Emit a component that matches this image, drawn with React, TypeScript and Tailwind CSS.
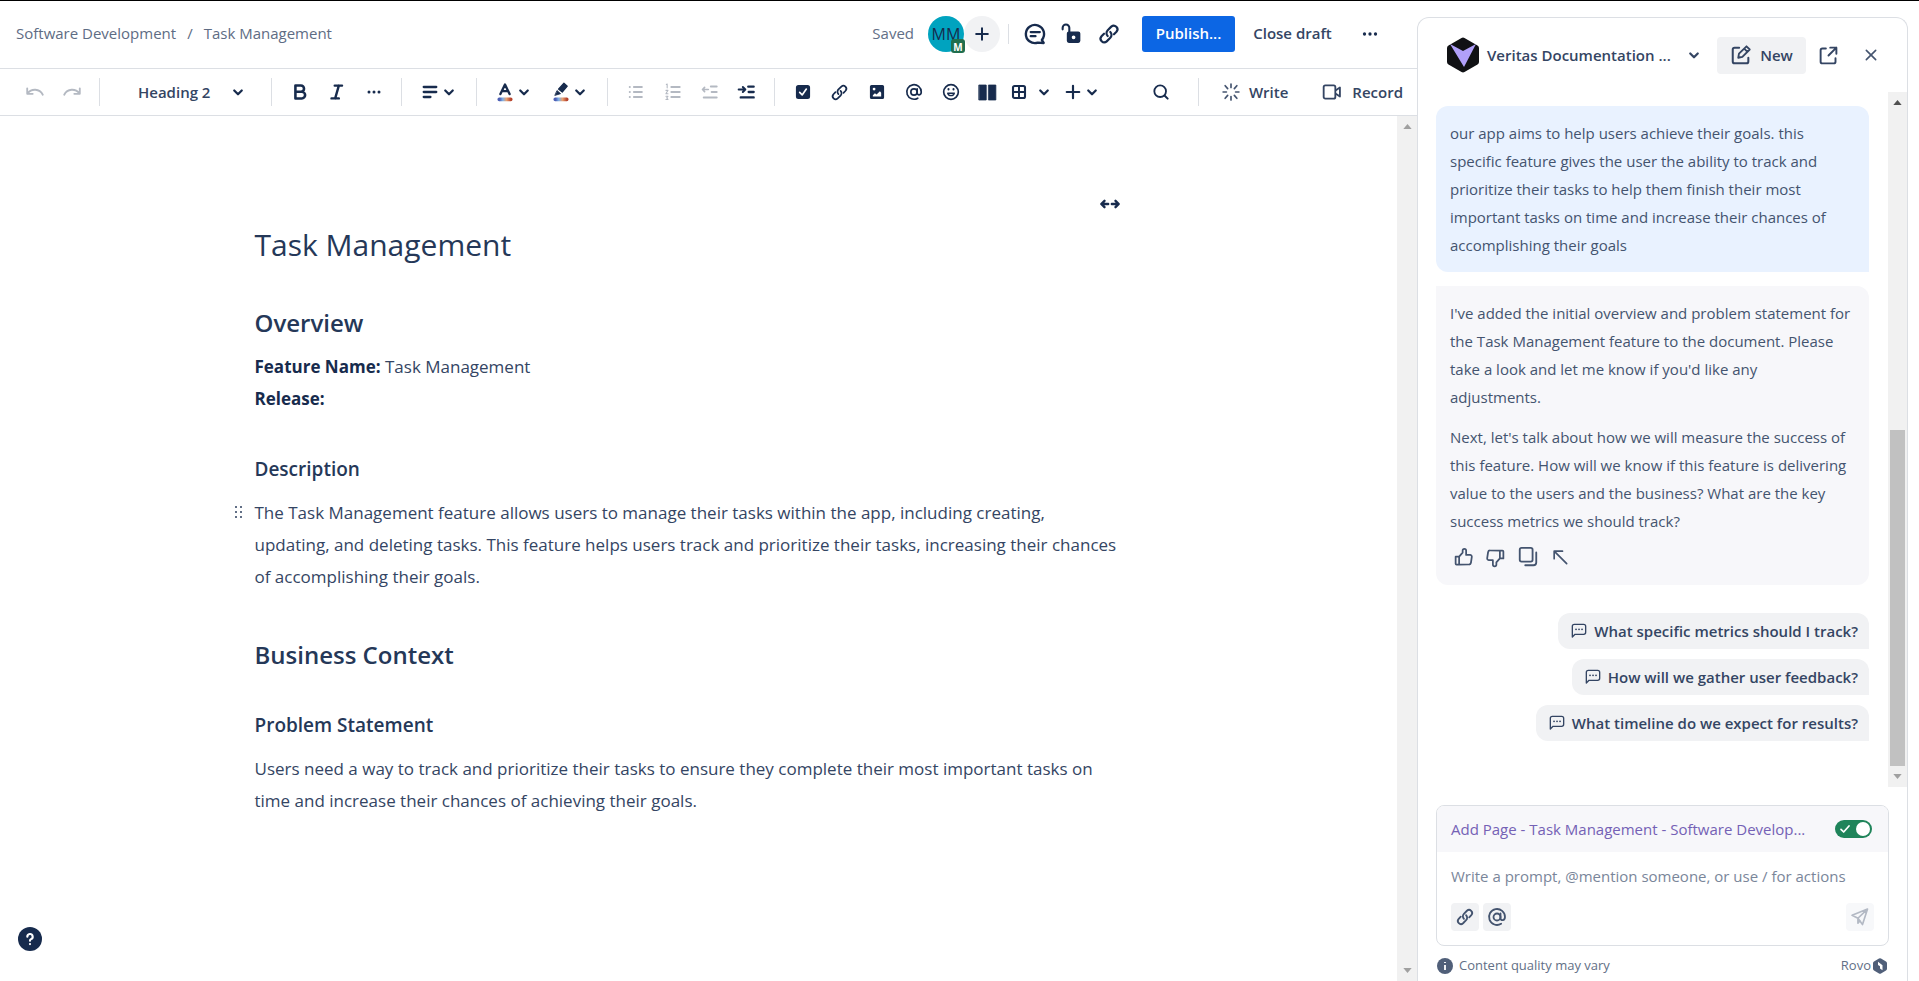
import { useState, type ReactNode } from 'react'
import { clsx } from 'clsx'

interface IconProps {
  size?: number
  className?: string
  children: ReactNode
}

function Icon({ size = 24, className, children }: IconProps) {
  return (
    <svg
      width={size}
      height={size}
      viewBox="0 0 24 24"
      fill="none"
      stroke="currentColor"
      strokeWidth={2}
      strokeLinecap="round"
      strokeLinejoin="round"
      className={clsx('shrink-0', className)}
      aria-hidden="true"
    >
      {children}
    </svg>
  )
}

function Chevron({ size = 18 }: { size?: number }) {
  return (
    <Icon size={size}>
      <path d="M7 10l5 5 5-5" strokeWidth={3} />
    </Icon>
  )
}

function LinkIcon({ size = 24 }: { size?: number }) {
  return (
    <Icon size={size}>
      <path d="M10.8 13.9a3.8 3.8 0 0 1 0-5.4l3.3-3.3a3.4 3.4 0 0 1 4.8 4.8l-2.3 2.3" />
      <path d="M13.2 10.1a3.8 3.8 0 0 1 0 5.4l-3.3 3.3a3.4 3.4 0 0 1-4.8-4.8l2.3-2.3" />
    </Icon>
  )
}

function DotsIcon({ size = 22 }: { size?: number }) {
  return (
    <Icon size={size}>
      <g fill="currentColor" stroke="none">
        <circle cx="6" cy="12" r="1.8" />
        <circle cx="12" cy="12" r="1.8" />
        <circle cx="18" cy="12" r="1.8" />
      </g>
    </Icon>
  )
}

function AtIcon({ size = 22 }: { size?: number }) {
  return (
    <Icon size={size}>
      <circle cx="12" cy="12" r="3.8" />
      <path d="M15.8 8.2v4.8c0 3.6 4.9 3.2 4.9-1A8.7 8.7 0 1 0 16.5 19.4" />
    </Icon>
  )
}

// Blue to red bar below the two colour pickers
function ColourBar({ id }: { id: string }) {
  return (
    <>
      <defs>
        <linearGradient id={id} x1="0" x2="1" y1="0" y2="0">
          <stop offset="0.15" stopColor="#4C5FB5" />
          <stop offset="0.35" stopColor="#7FB2E8" />
          <stop offset="0.6" stopColor="#E8A070" />
          <stop offset="0.9" stopColor="#B5402A" />
        </linearGradient>
      </defs>
      <rect x="3" y="18.5" width="18" height="4.500" rx="2" fill={`url(#${id})`} stroke="none" />
    </>
  )
}

interface ToolProps {
  label: string
  disabled?: boolean
  className?: string
  children: ReactNode
}

function Tool({ label, disabled, className, children }: ToolProps) {
  return (
    <button
      aria-label={label}
      disabled={disabled}
      className={clsx(
        'h-8 shrink-0 flex items-center justify-center rounded',
        className ?? 'w-[37px]',
        disabled ? 'text-[#B4B9C2]' : 'hover:bg-gray-100'
      )}
    >
      {children}
    </button>
  )
}

function Group({ children, last }: { children: ReactNode; last?: boolean }) {
  return (
    <div
      className={clsx(
        'flex h-7 shrink-0 items-center px-[9px]',
        !last && 'border-r border-[#DCDFE4]'
      )}
    >
      {children}
    </div>
  )
}

function TopBar() {
  return (
    <header className="flex h-[68px] shrink-0 items-center border-b border-[#DCDFE4] pr-[27px] pl-4 pb-[2px]">
      <nav aria-label="Breadcrumb" className="flex gap-[11px] text-[15px] text-[#5E6C84]">
        <a href="#space">Software Development</a>
        <span>/</span>
        <a href="#page">Task Management</a>
      </nav>

      <div className="ml-auto flex items-center">
        <span className="mr-[14px] text-[15px] text-[#626F86]">Saved</span>
        <div className="relative flex size-9 items-center justify-center rounded-full bg-[#00A3BF] text-[16px] leading-[16px] text-[#172B4D]">
          MM
          <span className="absolute -right-px -bottom-px flex size-[14px] items-end justify-center rounded-[3px] bg-[#216E4E] pb-px text-[10px] leading-[10px] font-bold text-white">
            M
          </span>
        </div>
        <button aria-label="Invite" className="flex size-9 items-center justify-center rounded-full bg-[#F1F2F4]">
          <Icon size={20}>
            <path d="M12 5v14M5 12h14" strokeWidth={2.4} />
          </Icon>
        </button>
        <span className="mx-2 h-5 w-px bg-[#DCDFE4]" />
        <button aria-label="Comments" className="flex w-9 justify-center">
          <Icon size={26}>
            <path d="M18.3 17.500A8.400 8.400 0 1 0 14.500 20l5.500.3z" strokeWidth={2.200} />
            <path d="M8 10.200h8.500M8 14h4.500" />
          </Icon>
        </button>
        <button aria-label="Restrictions" className="flex w-9 justify-center">
          <Icon size={25}>
            <path d="M3.500 8V6.500a3.200 3.200 0 0 1 6.400 0V11" />
            <path
              fillRule="evenodd"
              fill="currentColor"
              stroke="none"
              d="M9.500 10h9a2 2 0 0 1 2 2v7a2 2 0 0 1-2 2h-9a2 2 0 0 1-2-2v-7a2 2 0 0 1 2-2zm4.500 3.800a1.800 1.800 0 1 0 0 3.600 1.800 1.800 0 0 0 0-3.600z"
            />
          </Icon>
        </button>
        <button aria-label="Copy link" className="flex w-10 justify-center">
          <LinkIcon size={26} />
        </button>
        <button className="ml-[13px] h-9 w-[93px] rounded-[3px] bg-[#0C66E4] text-[15px] font-semibold text-white">
          Publish...
        </button>
        <button className="w-[115px] text-[15px] font-semibold text-[#344563]">Close draft</button>
        <button aria-label="More actions" className="flex w-10 justify-center">
          <DotsIcon />
        </button>
      </div>
    </header>
  )
}

function Toolbar() {
  return (
    <div
      role="toolbar"
      aria-label="Editor"
      className="flex h-[47px] shrink-0 items-center border-b border-[#DCDFE4] pl-[7px]"
    >
      <Group>
        <Tool label="Undo" disabled>
          <Icon size={22}>
            <path d="M3.500 8v6h6M4 13.500C8 8 17 8 20.500 15" />
          </Icon>
        </Tool>
        <Tool label="Redo" disabled>
          <Icon size={22}>
            <path d="M20.500 8v6h-6M20 13.500C16 8 7 8 3.500 15" />
          </Icon>
        </Tool>
      </Group>
      <Group>
        <div className="relative">
          <select
            aria-label="Text style"
            defaultValue="h2"
            className="h-8 w-[153px] appearance-none bg-transparent pl-[29px] text-[15px] font-semibold text-[#344563]"
          >
            <option value="h2">Heading 2</option>
          </select>
          <span className="pointer-events-none absolute top-[7px] right-[15px]">
            <Chevron />
          </span>
        </div>
      </Group>
      <Group>
        <Tool label="Bold">
          <Icon size={22}>
            <path d="M7 5h6a3.400 3.400 0 0 1 0 6.800H7zM7 11.800h7a3.600 3.600 0 0 1 0 7.200H7z" strokeWidth={2.800} />
          </Icon>
        </Tool>
        <Tool label="Italic">
          <Icon size={22}>
            <path d="M9.500 5h8M6 19h8M14 5l-4 14" strokeWidth={2.600} />
          </Icon>
        </Tool>
        <Tool label="More formatting">
          <DotsIcon size={20} />
        </Tool>
      </Group>
      <Group>
        <Tool label="Alignment" className="w-14">
          <Icon size={20}>
            <path d="M4.500 6h15M4.500 12h15M4.500 18h8" strokeWidth={2.800} />
          </Icon>
          <Chevron />
        </Tool>
      </Group>
      <Group>
        <Tool label="Text colour" className="w-14">
          <Icon size={20}>
            <path d="M6.500 14.500L12 3l5.500 11.500M8.500 11h7" strokeWidth={2.800} />
            <ColourBar id="text-bar" />
          </Icon>
          <Chevron />
        </Tool>
        <Tool label="Highlight colour" className="w-14">
          <Icon size={20}>
            <path d="M9 8.500L15.500 1.500l4 3.500-6 7z" fill="currentColor" strokeWidth={1.500} />
            <path d="M7.500 10.500l4 3.500L5 16z" fill="currentColor" strokeWidth={1} />
            <ColourBar id="highlight-bar" />
          </Icon>
          <Chevron />
        </Tool>
      </Group>
      <Group>
        <Tool label="Bullet list" disabled>
          <Icon size={20}>
            <path d="M9.500 6h9.500M9.500 12h9.500M9.500 18h9.500M4.500 6h.1M4.500 12h.1M4.500 18h.1" strokeWidth={2.400} />
          </Icon>
        </Tool>
        <Tool label="Numbered list" disabled>
          <Icon size={20}>
            <path d="M10 6h10M10 12h10M10 18h10" strokeWidth={2.400} />
            <path d="M4 3l1-.5V7M3.500 10H6l-2.500 4H6M3.500 17H6l-1.500 2L6 21H3.500" strokeWidth={1.300} />
          </Icon>
        </Tool>
        <Tool label="Outdent" disabled>
          <Icon size={20}>
            <path d="M13 5.500h7M14 12h6M4.500 18.500H20" strokeWidth={2.400} />
            <path d="M10 9H3M5.500 6.500L3 9l2.500 2.500" />
          </Icon>
        </Tool>
        <Tool label="Indent">
          <Icon size={20}>
            <path d="M13.500 5.500H20M14 12h6M4.500 18.500H20" strokeWidth={2.800} />
            <path d="M2 9h8M7 6l3 3-3 3" strokeWidth={2.400} />
          </Icon>
        </Tool>
      </Group>
      <Group last>
        <Tool label="Action item">
          <Icon size={20}>
            <rect x="4.500" y="4.500" width="15" height="15" rx="2" fill="currentColor" />
            <path d="M8 12.500l3 3 5-7" stroke="white" />
          </Icon>
        </Tool>
        <Tool label="Link">
          <LinkIcon size={21} />
        </Tool>
        <Tool label="Image">
          <Icon size={20}>
            <rect x="4.500" y="4.500" width="15" height="15" rx="1" fill="currentColor" />
            <circle cx="8.500" cy="8.500" r="1.700" fill="white" stroke="none" />
            <path d="M7 17.500v-1.500l2.500-2.500 2 1.500L15.500 11l1.500 2v4.500z" fill="white" stroke="none" />
          </Icon>
        </Tool>
        <Tool label="Mention">
          <AtIcon size={20} />
        </Tool>
        <Tool label="Emoji">
          <Icon size={20}>
            <circle cx="12" cy="12" r="8.800" />
            <path d="M8 13.500a4.200 4.200 0 0 0 8 0z" strokeWidth={1.600} />
            <path d="M9 8.500v.5M15 8.500v.5" strokeWidth={2.400} />
          </Icon>
        </Tool>
        <Tool label="Layouts" className="w-9">
          <Icon size={21}>
            <path d="M2.500 3.500h8v17h-8zM13.500 3.500h8v17h-8z" fill="currentColor" strokeWidth={1} />
          </Icon>
        </Tool>
        <Tool label="Table" className="w-[27px]">
          <Icon size={18}>
            <rect x="4" y="4" width="16" height="16" rx="2" strokeWidth={2.800} />
            <path d="M12 4v16M4 12h16" strokeWidth={2.600} />
          </Icon>
        </Tool>
        <Tool label="Table options" className="w-6">
          <Chevron />
        </Tool>
        <Tool label="Insert" className="w-[52px]">
          <Icon size={20}>
            <path d="M12 4.500v15M4.500 12h15" strokeWidth={2.600} />
          </Icon>
          <Chevron />
        </Tool>
      </Group>
      <div className="ml-auto flex h-7 items-center pr-[14px]">
        <Tool label="Find">
          <Icon size={20}>
            <circle cx="11" cy="11" r="7" strokeWidth={2.200} />
            <path d="M16.500 16.500L20 20" strokeWidth={2.400} />
          </Icon>
        </Tool>
        <span className="mr-[22px] ml-[18px] h-7 w-px bg-[#DCDFE4]" />
        <button className="flex items-center gap-2 text-[15px] font-semibold text-[#344563]">
          <Icon size={20} className="text-[#44546F]">
            <path
              d="M12 2.500v4M12 17.500v4M2.500 12h4M17.500 12h4M5 4.500l3 3.500M16 16l3 3.500M19 4.500L16 8M8 16l-3 3.500"
              strokeWidth={2}
            />
          </Icon>
          Write
        </button>
        <button className="ml-[34px] flex items-center gap-[10px] text-[15px] font-semibold text-[#344563]">
          <Icon size={20}>
            <rect x="2" y="4" width="14" height="16" rx="2" strokeWidth={2.200} />
            <path d="M17 9.500l4.500-3v11l-4.500-3" strokeWidth={2.200} />
          </Icon>
          Record
        </button>
      </div>
    </div>
  )
}

function Arrow({ up, dark }: { up?: boolean; dark?: boolean }) {
  return (
    <svg
      width="9"
      height="5"
      viewBox="0 0 10 6"
      className={clsx('my-2 shrink-0', dark ? 'text-[#505050]' : 'text-[#A0A0A0]')}
      aria-hidden="true"
    >
      <path fill="currentColor" d={up ? 'M5 0l5 6H0z' : 'M5 6L0 0h10z'} />
    </svg>
  )
}

function Document() {
  return (
    <article className="mx-auto w-full max-w-[888px] pt-[74px] text-[17px] leading-[32px] text-[#344563]">
      <div className="flex justify-end pr-[22px]">
        <button aria-label="Full width" className="flex h-7 items-center text-[#172B4D]">
          <Icon size={22}>
            <path d="M3 12h7M6 8.500L2.500 12 6 15.500M14 12h7M18 8.500l3.500 3.500-3.500 3.500" strokeWidth={2.600} />
          </Icon>
        </button>
      </div>
      <h1 className="mt-[3px] text-[30px] leading-[48px] text-[#253858]">Task Management</h1>

      <h2 className="mt-[38px] text-[24px] leading-[32px] font-semibold text-[#253858]">Overview</h2>
      <p className="mt-3">
        <strong className="font-bold text-[#172B4D]">Feature Name:</strong> Task Management
      </p>
      <p>
        <strong className="font-bold text-[#172B4D]">Release:</strong>
      </p>

      <h3 className="mt-[38px] text-[19px] leading-[32px] font-semibold text-[#253858]">Description</h3>
      <div className="relative mt-3">
        <svg
          width="8"
          height="14"
          viewBox="0 0 8 14"
          fill="#626F86"
          className="absolute top-[9px] -left-5"
          aria-hidden="true"
        >
          {[0, 5, 10].map((y) => (
            <g key={y}>
              <rect x="0" y={y} width="2" height="2" />
              <rect x="5" y={y} width="2" height="2" />
            </g>
          ))}
        </svg>
        <p>
          The Task Management feature allows users to manage their tasks within the app, including creating,
          <br />
          updating, and deleting tasks. This feature helps users track and prioritize their tasks, increasing their chances
          <br />
          of accomplishing their goals.
        </p>
      </div>

      <h2 className="mt-[46px] text-[24px] leading-[32px] font-semibold text-[#253858]">Business Context</h2>

      <h3 className="mt-[38px] text-[19px] leading-[32px] font-semibold text-[#253858]">Problem Statement</h3>
      <p className="mt-3">
        Users need a way to track and prioritize their tasks to ensure they complete their most important tasks on
        <br />
        time and increase their chances of achieving their goals.
      </p>
    </article>
  )
}

const SUGGESTIONS = [
  'What specific metrics should I track?',
  'How will we gather user feedback?',
  'What timeline do we expect for results?',
]

function ChatHeader() {
  return (
    <div className="flex h-[74px] shrink-0 items-center pr-[28px] pl-[29px]">
      <svg width="32" height="36" viewBox="0 0 32 36" aria-hidden="true" className="shrink-0">
        <path
          d="M14.500 1a3 3 0 0 1 3 0l13 7.500A3 3 0 0 1 32 11v14a3 3 0 0 1-1.500 2.500l-13 7.500a3 3 0 0 1-3 0l-13-7.500A3 3 0 0 1 0 25V11a3 3 0 0 1 1.500-2.500z"
          fill="#101114"
        />
        <path d="M3 7L16 14 29 7 17 30z" fill="#B1A0FA" />
      </svg>
      <button className="ml-2 flex flex-1 items-center justify-between text-[15px] font-semibold text-[#344563]">
        Veritas Documentation ...
        <Chevron />
      </button>
      <button className="ml-[14px] flex h-[37px] w-[89px] items-center justify-center gap-2 rounded bg-[#F1F2F4] text-[15px] font-semibold text-[#344563]">
        <Icon size={22}>
          <path d="M10 4H5a2 2 0 0 0-2 2v13a2 2 0 0 0 2 2h13a2 2 0 0 0 2-2v-4" strokeWidth={2.200} />
          <path d="M9 15l.8-4.500L18 2.500l3.500 3.500-8 8zM15.500 5L19 8.500" strokeWidth={2} />
        </Icon>
        New
      </button>
      <button aria-label="Open in full screen" className="ml-3 text-[#344563]">
        <Icon size={21}>
          <path d="M9 4H5a2 2 0 0 0-2 2v13a2 2 0 0 0 2 2h13a2 2 0 0 0 2-2v-4M14 3h7v7M21 3l-9 9" strokeWidth={2.200} />
        </Icon>
      </button>
      <button aria-label="Close chat" className="ml-6 text-[#44546F]">
        <Icon size={16}>
          <path d="M5 5l14 14M19 5L5 19" strokeWidth={2.400} />
        </Icon>
      </button>
    </div>
  )
}

function Messages() {
  return (
    <div className="flex h-[696px] min-h-0 shrink">
      <div className="flex-1 overflow-hidden pt-[14px] pr-[19px] pl-[18px] text-[15px] leading-[28px] text-[#44546F]">
        <div className="h-[166px] rounded-xl rounded-br-none bg-[#E9F2FF] px-[14px] py-[13px]">
          our app aims to help users achieve their goals. this
          <br />
          specific feature gives the user the ability to track and
          <br />
          prioritize their tasks to help them finish their most
          <br />
          important tasks on time and increase their chances of
          <br />
          accomplishing their goals
        </div>
        <div className="mt-[14px] rounded-xl rounded-tl-none bg-[#F7F7FA] px-[14px] pt-[13px] pb-[14px]">
          <p>
            I've added the initial overview and problem statement for
            <br />
            the Task Management feature to the document. Please
            <br />
            take a look and let me know if you'd like any
            <br />
            adjustments.
          </p>
          <p className="mt-3">
            Next, let's talk about how we will measure the success of
            <br />
            this feature. How will we know if this feature is delivering
            <br />
            value to the users and the business? What are the key
            <br />
            success metrics we should track?
          </p>
          <div className="mt-2 flex h-7 items-center gap-[11px] pl-[3px]">
            <button aria-label="Good response">
              <Icon size={21}>
                <path d="M3 11h4v9H4a1 1 0 0 1-1-1zM7 11l4-4.500V4a2 2 0 0 1 4 0v5h4.500a2 2 0 0 1 2 2.300l-1 6.700a2.300 2.300 0 0 1-2.300 2H7" />
              </Icon>
            </button>
            <button aria-label="Bad response">
              <Icon size={21}>
                <path d="M21 13h-4V4h3a1 1 0 0 1 1 1zM17 13l-4 4.500V20a2 2 0 0 1-4 0v-5H4.500a2 2 0 0 1-2-2.300l1-6.700a2.300 2.300 0 0 1 2.300-2H17" />
              </Icon>
            </button>
            <button aria-label="Copy">
              <Icon size={22}>
                <rect x="3" y="2" width="14" height="15" rx="2" />
                <path d="M21 7v11a3 3 0 0 1-3 3H9" />
              </Icon>
            </button>
            <button aria-label="Insert into page">
              <Icon size={20}>
                <path d="M5 14V5h10M5 5l15 15" />
              </Icon>
            </button>
          </div>
        </div>
        <div className="mt-7 flex flex-col items-end gap-[10px]">
          {SUGGESTIONS.map((text) => (
            <button
              key={text}
              className="flex h-9 items-center gap-[7px] rounded-xl rounded-br-none bg-[#F1F2F4] pr-[11px] pl-[13px] text-[15px] font-semibold text-[#344563]"
            >
              <Icon size={16}>
                <path d="M2 21V5a3 3 0 0 1 3-3h14a3 3 0 0 1 3 3v9a3 3 0 0 1-3 3H6z" />
                <path d="M7.500 9.500h.1M12 9.500h.1M16.500 9.500h.1" strokeWidth={2.600} />
              </Icon>
              {text}
            </button>
          ))}
        </div>
      </div>
      <div className="flex w-[19px] shrink-0 flex-col items-center bg-[#F1F1F1]">
        <Arrow up dark />
        <div className="mt-[317px] min-h-0 w-[15px] flex-1 bg-[#C1C1C1]" />
        <Arrow />
      </div>
    </div>
  )
}

function Composer() {
  const [addPage, setAddPage] = useState(true)
  const [prompt, setPrompt] = useState('')

  return (
    <div className="mx-[18px] mt-[18px]">
      <div className="overflow-hidden rounded-lg border border-[#DCDFE4]">
        <label className="flex h-[46px] cursor-pointer items-center justify-between bg-[#F7F7FA] pr-4 pl-[14px] text-[15px] text-[#7461B5]">
          Add Page - Task Management - Software Develop...
          <input
            type="checkbox"
            role="switch"
            checked={addPage}
            onChange={(e) => setAddPage(e.target.checked)}
            className="sr-only"
          />
          <span
            className={clsx(
              'flex h-[18px] w-[37px] shrink-0 items-center justify-between rounded-full px-[2px]',
              addPage ? 'bg-[#1F845A]' : 'flex-row-reverse bg-[#626F86]'
            )}
          >
            <Icon size={16} className="text-white">
              <path d="M6 12.500l4 4 8-9" strokeWidth={2.600} />
            </Icon>
            <span className="size-[14px] rounded-full bg-white" />
          </span>
        </label>
        <textarea
          aria-label="Prompt"
          rows={1}
          value={prompt}
          onChange={(e) => setPrompt(e.target.value)}
          placeholder="Write a prompt, @mention someone, or use / for actions"
          className="mt-[10px] block h-7 w-full resize-none overflow-hidden px-[14px] text-[15px] leading-[28px] outline-none placeholder:text-[#7A869A]"
        />
        <div className="mt-[13px] flex items-center gap-1 px-[14px] pb-[14px] text-[#44546F]">
          <button aria-label="Add link" className="flex size-7 items-center justify-center rounded bg-[#F1F2F4]">
            <LinkIcon size={22} />
          </button>
          <button aria-label="Mention someone" className="flex size-7 items-center justify-center rounded bg-[#F1F2F4]">
            <AtIcon />
          </button>
          <button
            aria-label="Send"
            className="ml-auto flex size-7 items-center justify-center rounded bg-[#F7F8FA] text-[#B3B9C4]"
          >
            <Icon size={20}>
              <path d="M21 2.500L2.500 10l7 3.500L15 21zM21 2.500l-11.500 11v6l2.500-3" />
            </Icon>
          </button>
        </div>
      </div>
      <div className="flex h-[35px] items-center justify-between pt-1 pr-[2px] pl-px text-[13px] text-[#626F86]">
        <span className="flex items-center gap-[6px]">
          <svg width="16" height="16" viewBox="0 0 16 16" aria-hidden="true">
            <circle cx="8" cy="8" r="8" fill="#505F79" />
            <path d="M8 7v5M8 4v1" stroke="white" strokeWidth="1.800" />
          </svg>
          Content quality may vary
        </span>
        <span className="flex items-center gap-[2px]">
          Rovo
          <svg width="14" height="16" viewBox="0 0 14 16" aria-hidden="true">
            <path
              d="M6 .6a2 2 0 0 1 2 0l5 3a2 2 0 0 1 1 1.700v5.400a2 2 0 0 1-1 1.700l-5 3a2 2 0 0 1-2 0l-5-3a2 2 0 0 1-1-1.700V5.300a2 2 0 0 1 1-1.700z"
              fill="#505F79"
            />
            <path d="M5 3.800l4.500 3.400v5L7 10.500V8.300L5 7z" fill="white" />
          </svg>
        </span>
      </div>
    </div>
  )
}

export default function App() {
  return (
    <div className="flex h-screen overflow-hidden border-t border-black bg-white font-['Open_Sans','Noto_Sans',sans-serif] text-[#172B4D]">
      <main className="flex min-w-0 flex-1 flex-col">
        <TopBar />
        <Toolbar />
        <div className="relative flex min-h-0 flex-1">
          <div className="min-w-0 flex-1">
            <Document />
          </div>
          <div className="flex w-5 shrink-0 flex-col items-center justify-between bg-[#F1F1F1]">
            <Arrow up />
            <Arrow />
          </div>
          <button
            aria-label="Help"
            className="absolute bottom-[30px] left-[18px] flex size-6 items-center justify-center rounded-full bg-[#172B4D] text-white"
          >
            <Icon size={16}>
              <path d="M8 8.500a4 4 0 1 1 5.500 3.700c-1 .5-1.500 1-1.500 2.300M12 19.500v.1" strokeWidth={3.200} />
            </Icon>
          </button>
        </div>
      </main>

      <aside
        aria-label="Chat"
        className="mt-4 mr-[11px] flex w-[491px] shrink-0 flex-col rounded-t-xl border border-b-0 border-[#DCDFE4]"
      >
        <ChatHeader />
        <Messages />
        <Composer />
      </aside>
    </div>
  )
}
